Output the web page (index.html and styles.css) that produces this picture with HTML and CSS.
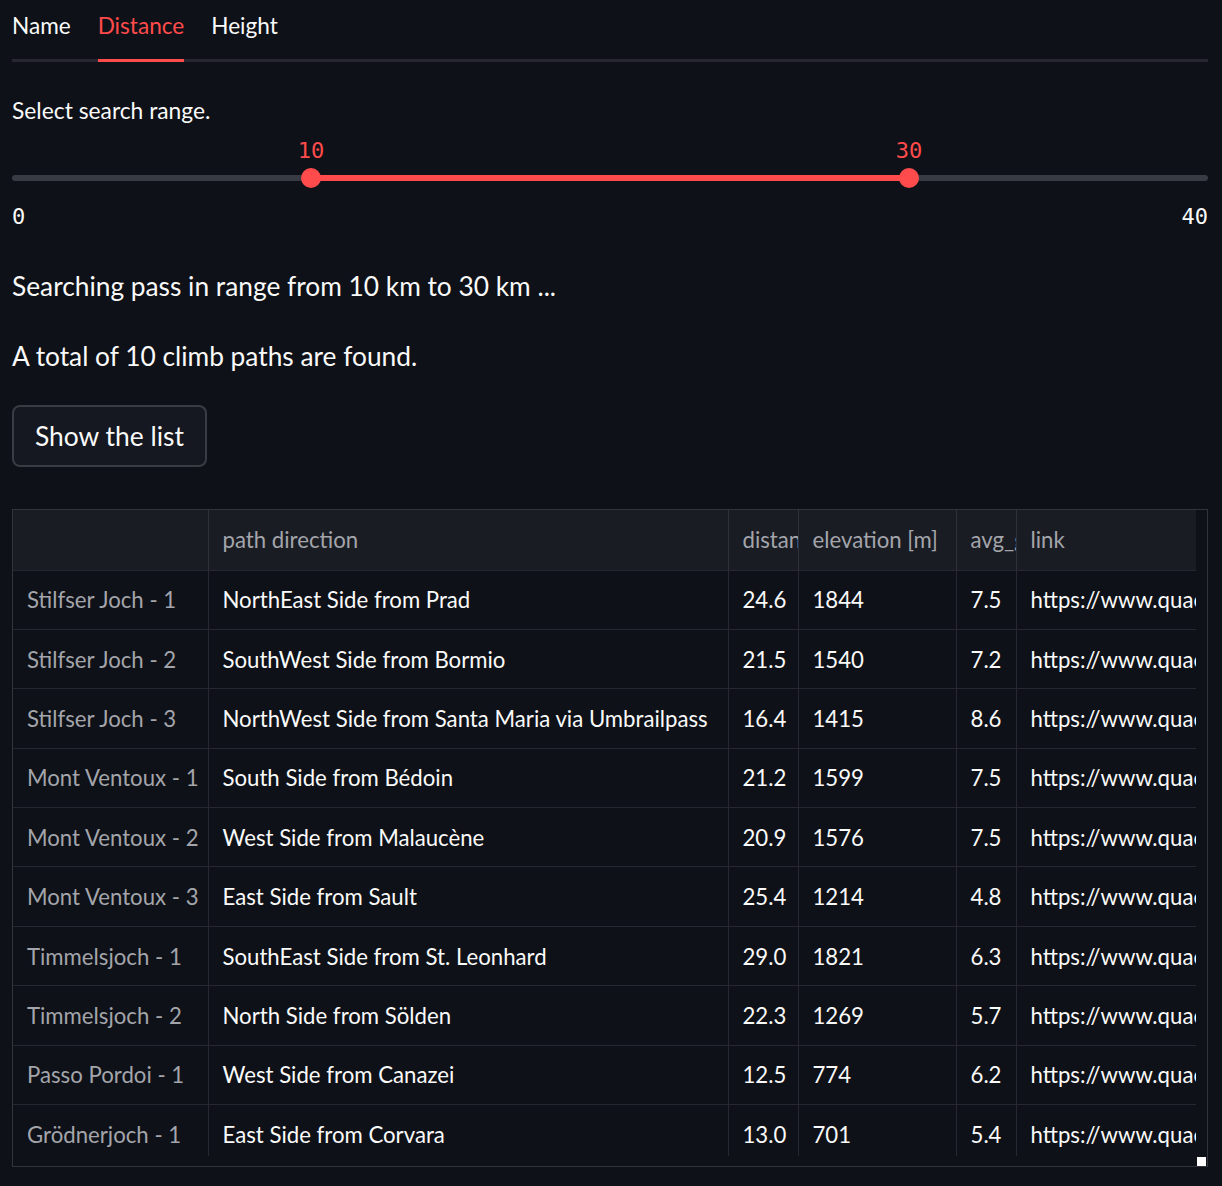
FILE: index.html
```html
<!DOCTYPE html>
<html>
<head>
<meta charset="utf-8">
<link rel="stylesheet" href="styles.css">
</head>
<body>
<div class="page">
  <div class="tabs">
    <div class="tab">Name</div>
    <div class="tab active">Distance</div>
    <div class="tab">Height</div>
  </div>

  <div class="label">Select search range.</div>

  <div class="slider">
    <div class="values">
      <span class="val" style="left:25%">10</span>
      <span class="val" style="left:75%">30</span>
    </div>
    <div class="track">
      <div class="fill" style="left:25%;width:50%"></div>
      <span class="thumb" style="left:25%"></span>
      <span class="thumb" style="left:75%"></span>
    </div>
    <div class="ends"><span>0</span><span>40</span></div>
  </div>

  <p class="text first">Searching pass in range from 10 km to 30 km ...</p>
  <p class="text second">A total of 10 climb paths are found.</p>

  <button class="btn">Show the list</button>

  <div class="frame">
    <div class="viewport">
      <table class="grid">
        <colgroup>
          <col style="width:195px"><col style="width:520px"><col style="width:70px"><col style="width:158px"><col style="width:60px"><col style="width:180px">
        </colgroup>
        <thead>
          <tr><th></th><th>path direction</th><th>distance [km]</th><th>elevation [m]</th><th>avg_grade</th><th>link</th></tr>
        </thead>
        <tbody>
          <tr><td class="idx">Stilfser Joch - 1</td><td>NorthEast Side from Prad</td><td class="num">24.6</td><td>1844</td><td class="num">7.5</td><td>https://www.quaeldich.de</td></tr>
          <tr><td class="idx">Stilfser Joch - 2</td><td>SouthWest Side from Bormio</td><td class="num">21.5</td><td>1540</td><td class="num">7.2</td><td>https://www.quaeldich.de</td></tr>
          <tr><td class="idx">Stilfser Joch - 3</td><td>NorthWest Side from Santa Maria via Umbrailpass</td><td class="num">16.4</td><td>1415</td><td class="num">8.6</td><td>https://www.quaeldich.de</td></tr>
          <tr><td class="idx">Mont Ventoux - 1</td><td>South Side from Bédoin</td><td class="num">21.2</td><td>1599</td><td class="num">7.5</td><td>https://www.quaeldich.de</td></tr>
          <tr><td class="idx">Mont Ventoux - 2</td><td>West Side from Malaucène</td><td class="num">20.9</td><td>1576</td><td class="num">7.5</td><td>https://www.quaeldich.de</td></tr>
          <tr><td class="idx">Mont Ventoux - 3</td><td>East Side from Sault</td><td class="num">25.4</td><td>1214</td><td class="num">4.8</td><td>https://www.quaeldich.de</td></tr>
          <tr><td class="idx">Timmelsjoch - 1</td><td>SouthEast Side from St. Leonhard</td><td class="num">29.0</td><td>1821</td><td class="num">6.3</td><td>https://www.quaeldich.de</td></tr>
          <tr><td class="idx">Timmelsjoch - 2</td><td>North Side from Sölden</td><td class="num">22.3</td><td>1269</td><td class="num">5.7</td><td>https://www.quaeldich.de</td></tr>
          <tr><td class="idx">Passo Pordoi - 1</td><td>West Side from Canazei</td><td class="num">12.5</td><td>774</td><td class="num">6.2</td><td>https://www.quaeldich.de</td></tr>
          <tr><td class="idx">Grödnerjoch - 1</td><td>East Side from Corvara</td><td class="num">13.0</td><td>701</td><td class="num">5.4</td><td>https://www.quaeldich.de</td></tr>
        </tbody>
      </table>
    </div>
    <div class="gutter-right"></div>
    <div class="gutter-bottom"></div>
    <div class="corner"><span class="handle"></span></div>
  </div>
</div>
</body>
</html>
```

FILE: styles.css
```css
* { box-sizing: border-box; }
html, body { margin: 0; padding: 0; background: #0e1117; }
body {
  font-family: Lato, "Noto Sans", sans-serif;
  color: #fafafa;
  width: 1222px;
  height: 1186px;
  overflow: hidden;
}
.page { padding: 0 14px 0 12px; }

.tabs {
  display: flex;
  gap: 27px;
  height: 62px;
  border-bottom: 3px solid #262730;
}
.tab {
  font-size: 22.6px;
  line-height: 52px;
  height: 59px;
  color: #fafafa;
}
.tab.active {
  color: #ff4b4b;
  border-bottom: 3px solid #ff4b4b;
  margin-bottom: -3px;
  height: 62px;
}

.label {
  font-size: 22.8px;
  line-height: 26px;
  margin-top: 35px;
}

.slider { position: relative; margin-top: 17px; }
.values { position: relative; height: 22px; }
.val {
  position: absolute;
  top: 0;
  transform: translateX(-50%);
  font-family: "DejaVu Sans Mono", "Liberation Mono", monospace;
  font-size: 22px;
  line-height: 22px;
  color: #ff4b4b;
}
.track {
  position: relative;
  margin-top: 13px;
  height: 6px;
  border-radius: 3px;
  background: #393b44;
}
.fill {
  position: absolute;
  top: 0;
  height: 6px;
  background: #ff4b4b;
}
.thumb {
  position: absolute;
  top: 50%;
  width: 20px;
  height: 20px;
  border-radius: 50%;
  background: #ff4b4b;
  transform: translate(-50%, -50%);
}
.ends {
  display: flex;
  justify-content: space-between;
  margin-top: 24px;
  font-family: "DejaVu Sans Mono", "Liberation Mono", monospace;
  font-size: 22px;
  line-height: 24px;
}

.text {
  margin: 0;
  font-size: 26.3px;
  line-height: 32px;
}
.text.first { margin-top: 41px; }
.text.second { margin-top: 38px; }

.btn {
  display: block;
  margin-top: 33px;
  height: 62px;
  padding: 0 21px;
  background: #151820;
  border: 2px solid #3a3c44;
  border-radius: 8px;
  color: #fafafa;
  font-family: inherit;
  font-size: 26.4px;
}

.frame {
  margin-top: 42px;
  width: 1196px;
  height: 658px;
  border: 1px solid #32343b;
  display: grid;
  grid-template-columns: 1fr 11px;
  grid-template-rows: 1fr 10px;
}
.viewport { overflow: hidden; }
.grid {
  border-collapse: collapse;
  table-layout: fixed;
  width: 1183px;
  font-size: 22.2px;
}
.grid th, .grid td {
  text-align: left;
  padding: 0 14px;
  white-space: nowrap;
  overflow: hidden;
  text-overflow: clip;
  border-right: 1px solid #262730;
  border-bottom: 1px solid #262730;
  font-weight: 400;
}
.grid th {
  height: 60px;
  background: #1a1c24;
  color: #a3a5ab;
  border-right-color: #30323a;
}
.grid td { height: 59.4px; color: #fafafa; }
.grid td.idx { color: #a3a5ab; }
.grid td.num { text-align: right; }
.grid tr > :last-child { border-right: none; }
.grid tbody tr:last-child td { border-bottom: none; }

.corner { position: relative; }
.handle {
  position: absolute;
  right: 1px;
  bottom: 0;
  width: 9px;
  height: 9px;
  background: #ffffff;
}
```
